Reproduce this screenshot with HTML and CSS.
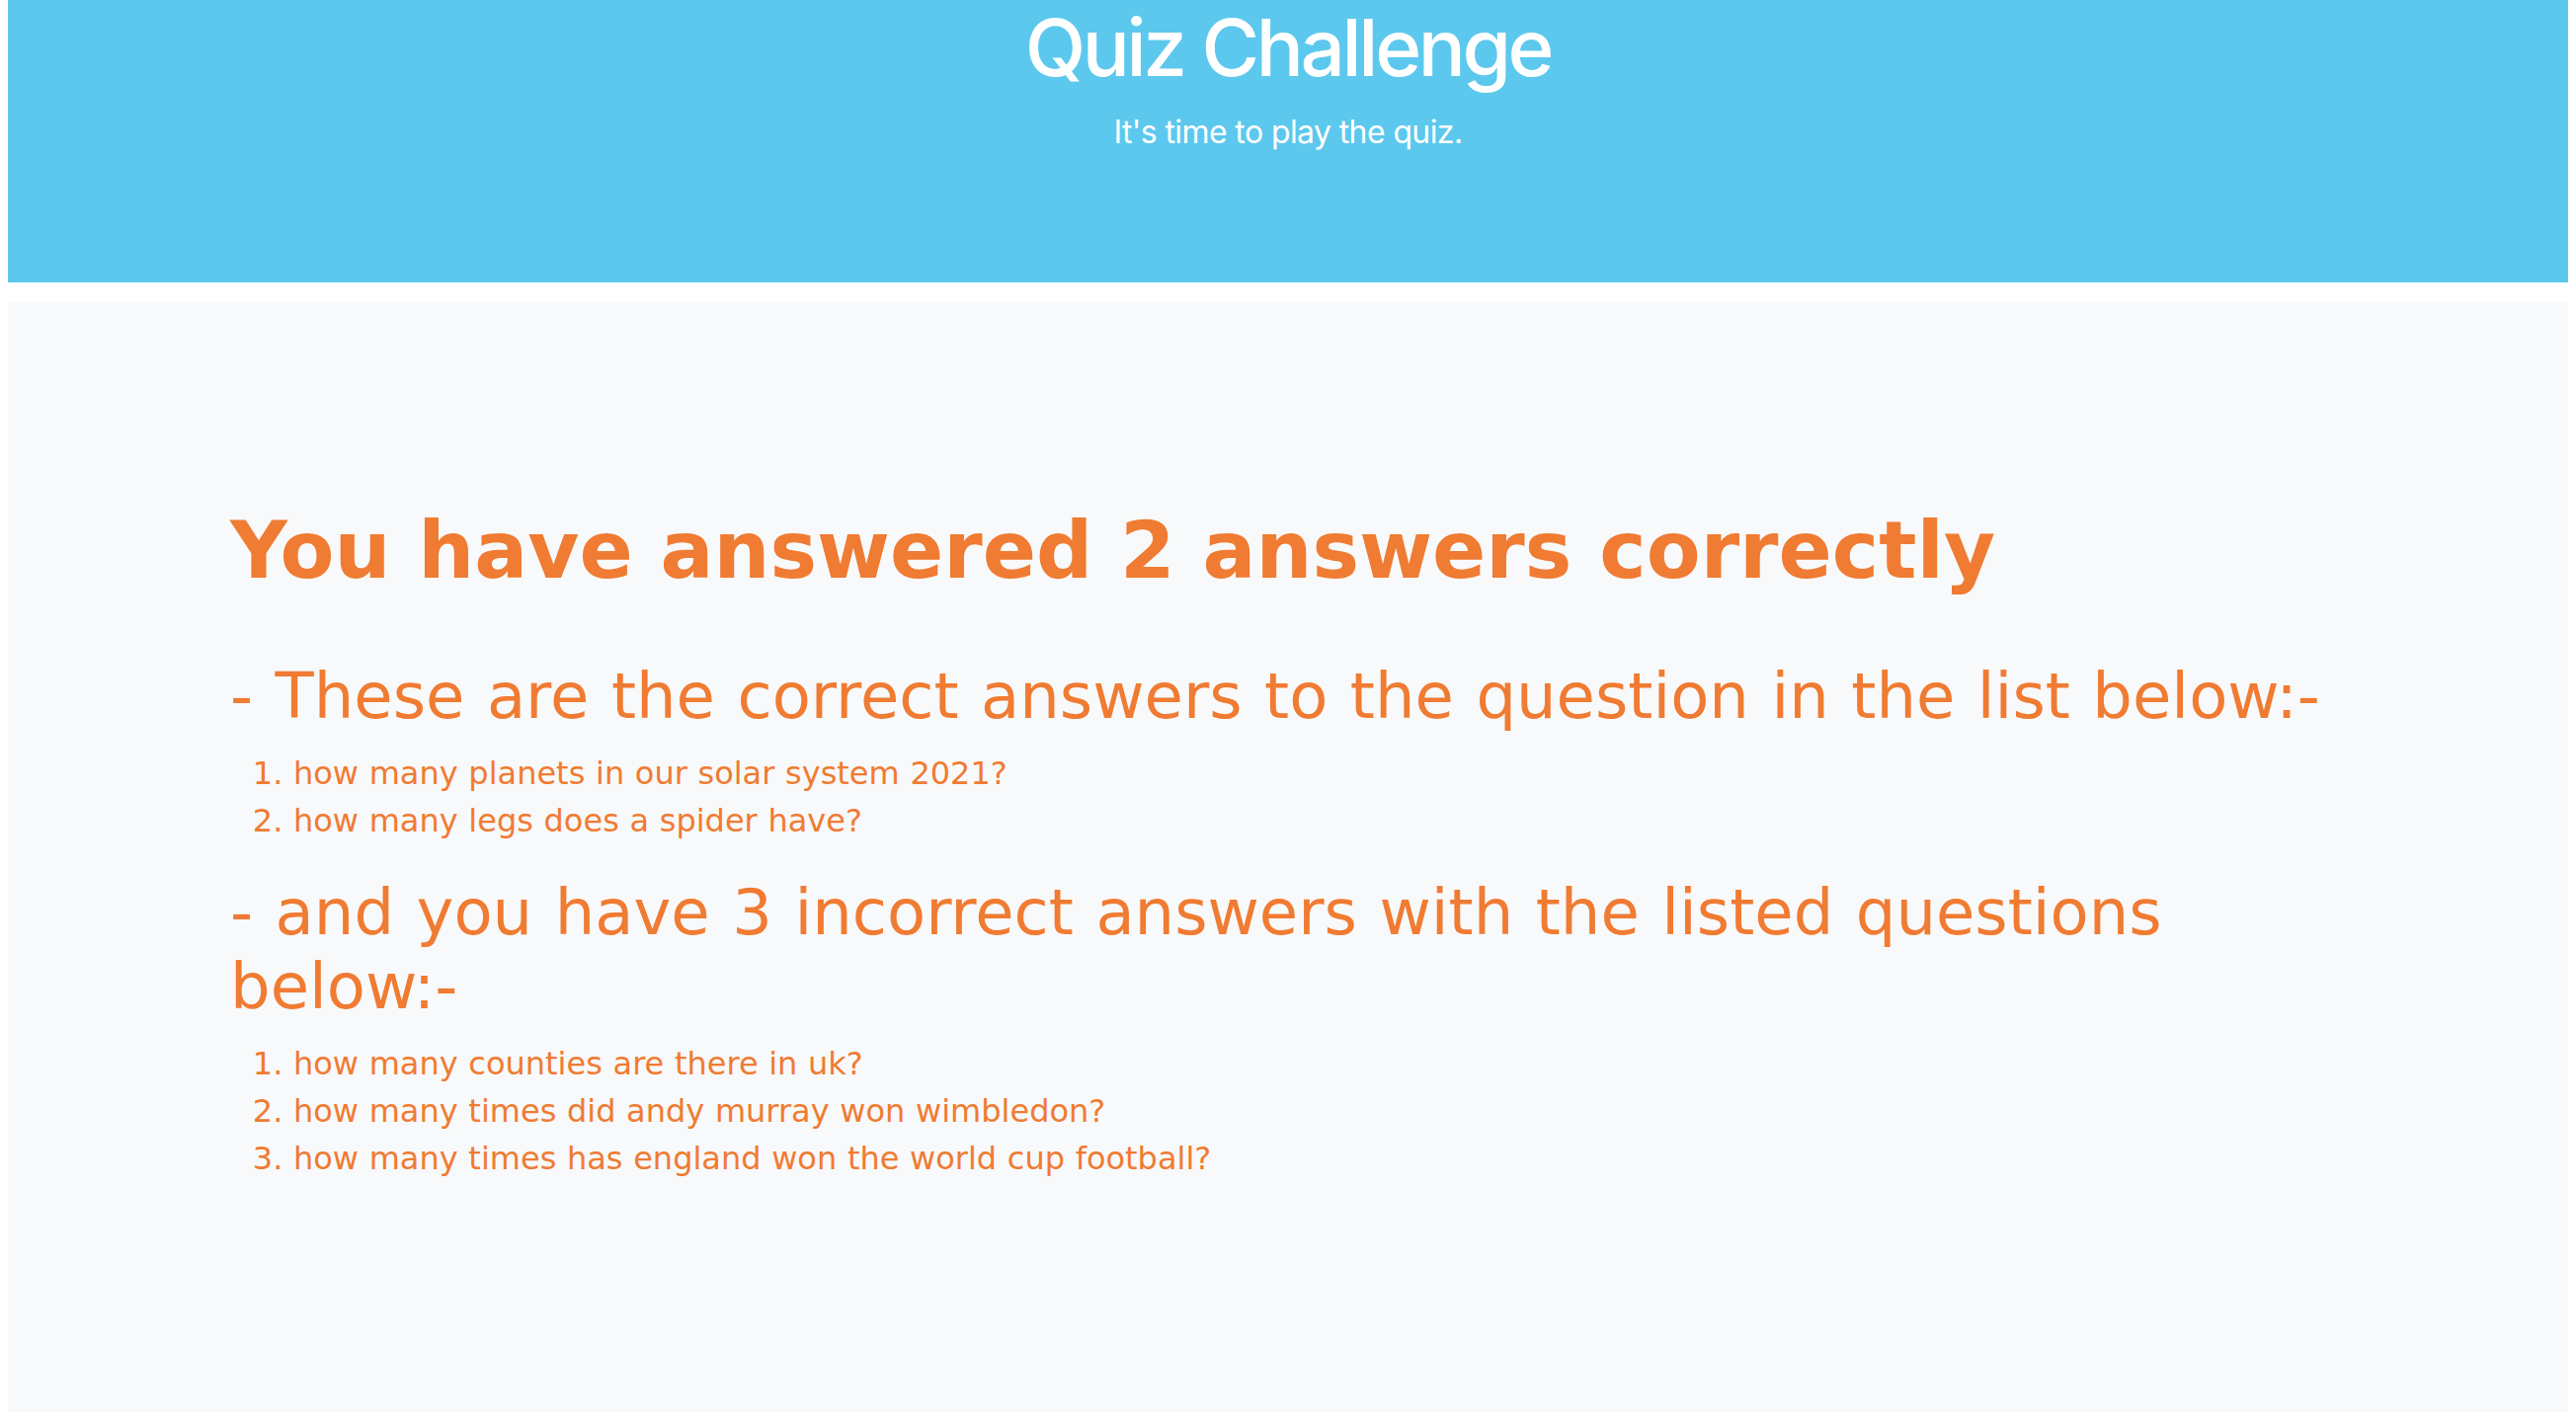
FILE: index.html
```html
<!DOCTYPE html>
<html lang="en">
<head>
<meta charset="utf-8">
<title>Quiz Challenge</title>
<link rel="stylesheet" href="styles.css">
</head>
<body>
<header class="hero">
  <h1 class="hero-title">Quiz Challenge</h1>
  <p class="hero-lead">It's time to play the quiz.</p>
</header>
<main class="result">
  <h1 class="result-title">You have answered 2 answers correctly</h1>
  <h2 class="result-sub">- These are the correct answers to the question in the list below:-</h2>
  <ol class="result-list">
    <li>how many planets in our solar system 2021?</li>
    <li>how many legs does a spider have?</li>
  </ol>
  <h2 class="result-sub">- and you have 3 incorrect answers with the listed questions<br>below:-</h2>
  <ol class="result-list">
    <li>how many counties are there in uk?</li>
    <li>how many times did andy murray won wimbledon?</li>
    <li>how many times has england won the world cup football?</li>
  </ol>
</main>
</body>
</html>
```

FILE: styles.css
```css
html, body {
  background: #ffffff;
}
body {
  margin: 0 8px 8px;
  font-family: Inter, "Liberation Sans", sans-serif;
  font-size: 32px;
  line-height: 1.5;
}
.hero {
  background: #5cc8ed;
  color: #ffffff;
  text-align: center;
  height: 286px;
  box-sizing: border-box;
  padding-top: 0;
}
.hero-title {
  margin: 0 0 14px;
  font-size: 80px;
  font-weight: 500;
  line-height: 1.2;
  letter-spacing: -3.4px;
}
.hero-lead {
  margin: 0;
  font-size: 32px;
  font-weight: 400;
  line-height: 1.5;
  letter-spacing: -0.6px;
}
.result {
  margin-top: 20px;
  background: #f8f9fa;
  min-height: 1124px;
  box-sizing: border-box;
  padding: 204px 225px 40px;
  color: #f07b32;
  font-family: "DejaVu Sans", Verdana, sans-serif;
}
.result-title {
  margin: 0 0 62px;
  font-size: 80px;
  font-weight: 700;
  line-height: 1.2;
}
.result-sub {
  margin: 0 0 16px;
  font-size: 64px;
  font-weight: 400;
  line-height: 1.17;
  word-spacing: 0.034em;
}
.result-list {
  margin: 0 0 32px;
  padding-left: 64px;
  font-size: 32px;
  line-height: 1.5;
  word-spacing: 0.015em;
}
```
